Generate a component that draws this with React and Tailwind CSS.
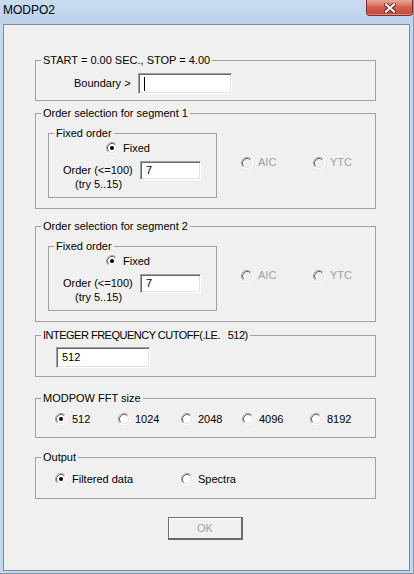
import React from 'react';

// classic win32 radio, drawn as two bevelled rings
const Radio = ({ checked, disabled }) => (
	<svg width="12" height="12" viewBox="0 0 12 12" className="shrink-0">
		<path d="M2.11 9.89A5.5 5.5 0 0 1 9.89 2.11" fill="none" stroke="#a0a0a0" />
		<path d="M9.89 2.11A5.5 5.5 0 0 1 2.11 9.89" fill="none" stroke="#ffffff" />
		<circle cx="6" cy="6" r="4" fill={disabled ? '#f0f0f0' : '#ffffff'} />
		<path d="M2.82 9.18A4.5 4.5 0 0 1 9.18 2.82" fill="none" stroke="#696969" />
		<path d="M9.18 2.82A4.5 4.5 0 0 1 2.82 9.18" fill="none" stroke="#e3e3e3" />
		{checked && <circle cx="6" cy="6" r="2" fill="#000000" />}
	</svg>
);

const Option = ({ label, checked, disabled, className = '' }) => (
	<div className={`flex items-center gap-[5px] h-[12px] ${className}`}>
		<Radio checked={checked} disabled={disabled} />
		<span className={disabled ? 'text-[#a0a0a0]' : 'text-black'}>{label}</span>
	</div>
);

const Group = ({ title, className = '', legendClass = '', children }) => (
	<fieldset className={`border border-[#a0a0a0] ${className}`}>
		<legend className={`ml-[5px] px-[2px] leading-[13px] whitespace-pre ${legendClass}`}>{title}</legend>
		{children}
	</fieldset>
);

const Textbox = ({ value, caret, className = '' }) => (
	<div
		className={`flex items-center bg-white border border-t-[#a0a0a0] border-l-[#a0a0a0] border-b-white border-r-white shadow-[inset_1px_1px_0_#696969,inset_-1px_-1px_0_#e3e3e3] pl-[5px] ${className}`}
	>
		{caret && <div className="w-px h-[14px] bg-black" />}
		{value && <span>{value}</span>}
	</div>
);

const Segment = ({ n, className = '' }) => (
	<Group title={`Order selection for segment ${n}`} className={`w-[341px] ${className}`}>
		<div className="flex items-center pt-[7px] pb-[10px]">
			<Group title="Fixed order" className="ml-[12px] w-[169px]">
				<Option label="Fixed" checked className="ml-[57px] mt-[2px]" />
				<div className="flex items-start mt-[7px] pb-[6px]">
					<div className="ml-[14px] w-[77px] mt-[2px] leading-[14px] flex flex-col">
						<span>Order (&lt;=100)</span>
						<span className="pl-[12px]">(try 5..15)</span>
					</div>
					<Textbox value="7" className="w-[61px] h-[19px]" />
				</div>
			</Group>
			<Option label="AIC" disabled className="ml-[24px] w-[72px]" />
			<Option label="YTC" disabled />
		</div>
	</Group>
);

const App = () => {
	return (
		<div className="w-[414px] h-[574px] flex flex-col bg-[#c4d7ee] border-r border-b border-r-[#8496ab] border-b-[#8496ab] font-['Liberation_Sans',Arial,sans-serif] text-[11px] text-black overflow-hidden">
			<div className="h-[24px] shrink-0 flex items-start justify-between bg-gradient-to-b from-[#c9dbf0] via-[#c2d6ee] to-[#bcd1ea]">
				<span className="pl-[3px] pt-[3px] text-[12px] leading-[14px]">MODPO2</span>
				<div className="w-[47px] h-[16px] flex items-center justify-center rounded-b-[4px] border border-t-0 border-[#7c3028] bg-gradient-to-b from-[#e8a696] via-[#d3604f] to-[#c2463a] shadow-[inset_0_-1px_0_#e78c7c]">
					<svg width="12" height="10" viewBox="0 0 12 10">
						<path d="M2 1.5L10 8.5M10 1.5L2 8.5" stroke="#5b1d16" strokeWidth="4" strokeLinecap="square" />
						<path d="M2 1.5L10 8.5M10 1.5L2 8.5" stroke="#ffffff" strokeWidth="2.2" strokeLinecap="square" />
					</svg>
				</div>
			</div>

			<div className="mx-[3px] h-[547px] shrink-0 border border-[#7a8ca1] bg-[#f0f0f0]">
				<div className="pl-[31px] pt-[29px] flex flex-col w-[372px]">
					<Group title="START = 0.00 SEC., STOP = 4.00" className="w-[341px]">
						<div className="flex items-center pt-[6px] pb-[6px]">
							<span className="ml-[38px] w-[64px]">Boundary &gt;</span>
							<Textbox caret className="w-[94px] h-[21px]" />
						</div>
					</Group>

					<Segment n={1} className="mt-[6px]" />
					<Segment n={2} className="mt-[11px]" />

					<Group
						title="INTEGER FREQUENCY CUTOFF(.LE.   512)"
						className="w-[341px] mt-[7px]"
						legendClass="tracking-[-0.5px]"
					>
						<div className="pt-[5px] pb-[8px]">
							<Textbox value="512" className="ml-[20px] w-[94px] h-[21px]" />
						</div>
					</Group>

					<Group title="MODPOW FFT size" className="w-[341px] mt-[15px]">
						<div className="flex items-center pt-[8px] pb-[12px] pl-[19px]">
							<Option label="512" checked className="w-[63px]" />
							<Option label="1024" className="w-[63px]" />
							<Option label="2048" className="w-[61px]" />
							<Option label="4096" className="w-[68px]" />
							<Option label="8192" />
						</div>
					</Group>

					<Group title="Output" className="w-[341px] mt-[13px]">
						<div className="flex items-center pt-[9px] pb-[13px] pl-[19px]">
							<Option label="Filtered data" checked className="w-[126px]" />
							<Option label="Spectra" />
						</div>
					</Group>

					<div className="w-[341px] flex justify-center mt-[18px]">
						<button
							type="button"
							disabled
							className="w-[75px] h-[23px] border border-[#707070] border-r-2 border-b-2 border-r-[#696969] border-b-[#696969] bg-[#f0f0f0] shadow-[inset_1px_1px_0_#ffffff] text-[#a0a0a0] text-[11px]"
						>
							OK
						</button>
					</div>
				</div>
			</div>
		</div>
	);
};

export default App;
